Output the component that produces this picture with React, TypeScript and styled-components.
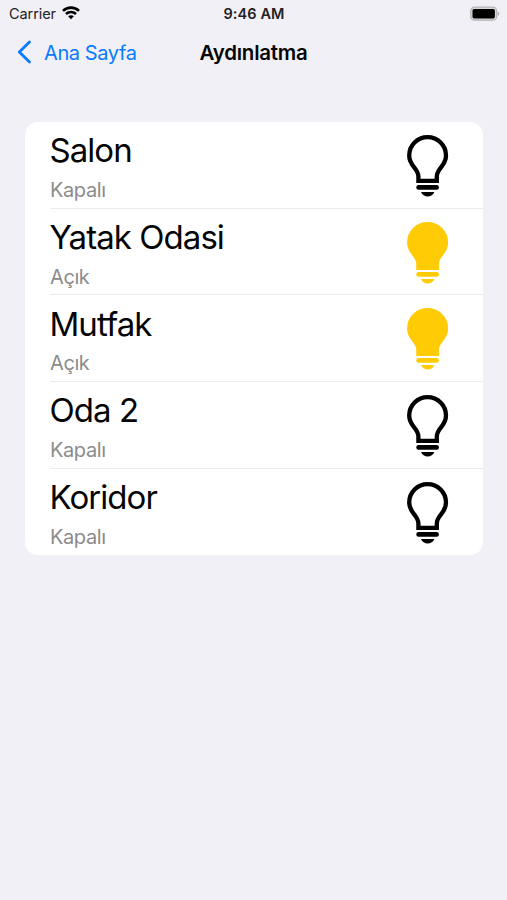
import React from "react";
import styled, { createGlobalStyle } from "styled-components";

const GlobalStyle = createGlobalStyle`
  * { box-sizing: border-box; }
  body { margin: 0; background: #f1f0f6; }
`;

const Screen = styled.main`
  min-height: 900px;
  background: #f1f0f6;
  font-family: Inter, "Liberation Sans", sans-serif;
  color: #050505;
`;

const StatusBar = styled.div`
  display: grid;
  grid-template-columns: 1fr auto 1fr;
  align-items: center;
  height: 27px;
  padding: 0 7px 0 9px;
`;

const Carrier = styled.div`
  display: flex;
  align-items: center;
  gap: 6px;
  font-size: 14.5px;
  letter-spacing: -0.08px;
  color: #222;
`;

const WifiIcon = styled.svg`
  display: block;
  margin-top: -1px;
`;

const Clock = styled.div`
  margin-left: -1px;
  font-size: 14.5px;
  font-weight: 600;
  letter-spacing: 0.1px;
  color: #222;
`;

const Battery = styled.svg`
  justify-self: end;
  display: block;
`;

const NavBar = styled.header`
  display: grid;
  grid-template-columns: 1fr auto 1fr;
  align-items: center;
  height: 50px;
  padding: 0 17px;
`;

const BackButton = styled.button`
  display: flex;
  align-items: center;
  gap: 12px;
  padding: 0;
  border: 0;
  background: none;
  font: inherit;
  font-size: 20px;
  line-height: 26px;
  letter-spacing: -0.4px;
  color: #087bff;
  cursor: pointer;
`;

const BackLabel = styled.span`
  padding-top: 1px;
`;

const Title = styled.h1`
  margin: 0;
  font-size: 20.5px;
  font-weight: 600;
  letter-spacing: -0.25px;
`;

const List = styled.ul`
  list-style: none;
  margin: 45px 24.5px 0 25px;
  padding: 0;
  border-radius: 13px;
  background: #fff;
  overflow: hidden;
`;

const Row = styled.li`
  height: 86.7px;
  padding-left: 25px;
`;

const RowBody = styled.div<{ $divided: boolean }>`
  display: flex;
  justify-content: space-between;
  height: 100%;
  padding: 8.4px 33.5px 0 0;
  border-bottom: ${(p) => (p.$divided ? "1px solid #ebebed" : "0")};
`;

const Room = styled.div`
  margin-left: -0.5px;
  line-height: 40px;
  font-size: 33px;
  letter-spacing: -0.95px;
`;

const State = styled.div`
  margin-top: 6.5px;
  line-height: 26px;
  font-size: 20px;
  letter-spacing: -0.4px;
  color: #8c8c8c;
`;

const BulbSvg = styled.svg`
  display: block;
  margin-top: 4.6px;
`;

function Bulb({ on }: { on: boolean }) {
  const color = on ? "#ffcb05" : "#000";
  return (
    <BulbSvg width="42" height="62" viewBox="0 0 42 62" fill={color}>
      <path
        d="M11.4 45.9V41.5C11.4 37.4 9.8 35.4 6.8 31.8C4.2 28.6 2.2 25 2.2 20.5C2.2 10.3 10.4 2.2 20.6 2.2C30.8 2.2 39 10.3 39 20.5C39 25 37 28.6 34.4 31.8C31.4 35.4 29.8 37.4 29.8 41.5V45.9Z"
        fill={on ? color : "none"}
        stroke={color}
        strokeWidth="4.3"
      />
      <rect x="9.3" y="50.1" width="22.6" height="4.6" rx="2.2" />
      <path d="M14 57H27.4C26.2 60 23.8 61.4 20.7 61.4C17.6 61.4 15.2 60 14 57Z" />
    </BulbSvg>
  );
}

const rooms = [
  { name: "Salon", on: false },
  { name: "Yatak Odasi", on: true },
  { name: "Mutfak", on: true },
  { name: "Oda 2", on: false },
  { name: "Koridor", on: false },
];

export default function App() {
  return (
    <Screen>
      <GlobalStyle />
      <StatusBar>
        <Carrier>
          Carrier
          <WifiIcon width="18" height="14" viewBox="0 0 18 14" fill="none" stroke="#000" strokeWidth="2.6">
            <path d="M1 4.9C5.5 0.5 12.5 0.5 17 4.9" />
            <path d="M4 8C6.8 5.3 11.2 5.3 14 8" />
            <path d="M6.1 10.3C7.7 8.8 10.3 8.8 11.9 10.3L9 13.3Z" fill="#000" stroke="none" />
          </WifiIcon>
        </Carrier>
        <Clock>9:46 AM</Clock>
        <Battery width="31" height="16" viewBox="0 0 31 16">
          <rect x="1.7" y="1.2" width="26" height="13" rx="3.8" fill="#d9d9dc" stroke="#b4b4b7" strokeWidth="1.2" />
          <rect x="3.5" y="3" width="22.4" height="9.4" rx="1.6" fill="#000" />
          <path d="M28.8 5.5C30.8 6.4 30.8 9 28.8 9.9Z" fill="#a9a9ac" />
        </Battery>
      </StatusBar>
      <NavBar>
        <BackButton>
          <svg width="15" height="24" viewBox="0 0 15 24" fill="none" stroke="#087bff" strokeWidth="2.8" strokeLinecap="round" strokeLinejoin="round">
            <path d="M12.5 2L2.3 12L12.5 22" />
          </svg>
          <BackLabel>Ana Sayfa</BackLabel>
        </BackButton>
        <Title>Aydınlatma</Title>
      </NavBar>
      <List>
        {rooms.map((room, i) => (
          <Row key={room.name}>
            <RowBody $divided={i < rooms.length - 1}>
              <div>
                <Room>{room.name}</Room>
                <State>{room.on ? "Açık" : "Kapalı"}</State>
              </div>
              <Bulb on={room.on} />
            </RowBody>
          </Row>
        ))}
      </List>
    </Screen>
  );
}
